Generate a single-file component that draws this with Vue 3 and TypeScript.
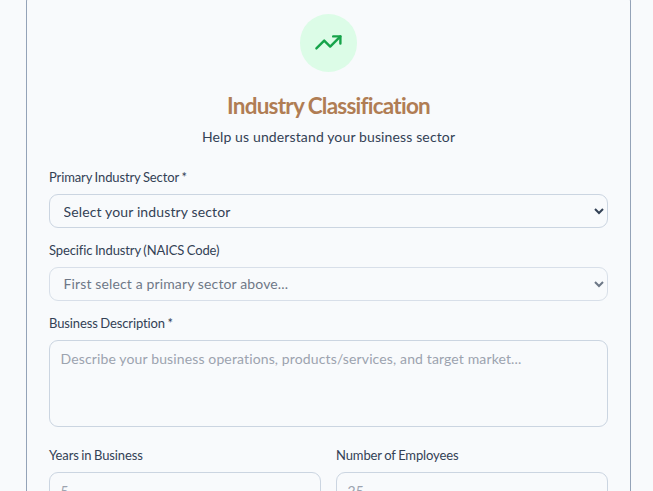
<script setup lang="ts">
import { ref } from 'vue'

const sector = ref('')
const naics = ref('')
const description = ref('')
const years = ref('')
const employees = ref('')
</script>

<template>
  <main class="page">
    <section class="card">
      <header class="head">
        <div class="badge">
          <svg viewBox="0 0 24 24" fill="none" stroke="currentColor" stroke-width="2" stroke-linecap="round" stroke-linejoin="round">
            <path d="M22 7 13.5 15.5 8.5 10.5 2 17" />
            <path d="M16 7h6v6" />
          </svg>
        </div>
        <h2>Industry Classification</h2>
        <p>Help us understand your business sector</p>
      </header>
      <form class="form" @submit.prevent>
        <div class="field">
          <label for="sector">Primary Industry Sector *</label>
          <select id="sector" v-model="sector">
            <option value="">Select your industry sector</option>
          </select>
        </div>
        <div class="field">
          <label for="naics">Specific Industry (NAICS Code)</label>
          <select id="naics" v-model="naics" disabled>
            <option value="">First select a primary sector above...</option>
          </select>
        </div>
        <div class="field description">
          <label for="description">Business Description *</label>
          <textarea id="description" v-model="description" placeholder="Describe your business operations, products/services, and target market..."></textarea>
        </div>
        <div class="row">
          <div class="field">
            <label for="years">Years in Business</label>
            <input id="years" v-model="years" type="number" placeholder="5" />
          </div>
          <div class="field">
            <label for="employees">Number of Employees</label>
            <input id="employees" v-model="employees" type="number" placeholder="25" />
          </div>
        </div>
      </form>
    </section>
  </main>
</template>

<style>
html {
  background: #f8fafc;
}
body {
  margin: 0;
  overflow: hidden;
}
</style>

<style scoped>
* {
  box-sizing: border-box;
}
.page {
  height: 491px;
  overflow: hidden;
  background: #f8fafc;
  color: #334155;
  font-family: Lato, sans-serif;
  font-size: 14px;
}
.card {
  width: 605px;
  height: 600px;
  margin: -9px 0 0 26px;
  padding: 22px;
  border: 1px solid #94a3b8;
  border-radius: 10px;
}
.head {
  display: flex;
  flex-direction: column;
  align-items: center;
}
.badge {
  display: flex;
  align-items: center;
  justify-content: center;
  width: 57.6px;
  height: 57.6px;
  border-radius: 50%;
  background: #dcfce7;
  color: #16a34a;
}
.badge svg {
  width: 28.8px;
  height: 28.8px;
}
h2 {
  margin: 19px 0 0;
  color: #b07d54;
  font-size: 22.5px;
  font-weight: 700;
  line-height: 29px;
  letter-spacing: -0.76px;
  word-spacing: -0.5px;
}
p {
  margin: 5px 0 0;
  line-height: 23px;
  letter-spacing: 0.13px;
}
.form {
  display: flex;
  flex-direction: column;
  gap: 14px;
  margin-top: 21px;
}
.field {
  display: flex;
  flex-direction: column;
  gap: 8px;
  min-width: 0;
}
.description {
  margin-bottom: 6px;
}
label {
  height: 17px;
  font-size: 13px;
  font-weight: 400;
  line-height: 17px;
  letter-spacing: -0.12px;
  word-spacing: -0.6px;
}
select,
textarea,
input {
  width: 100%;
  margin: 0;
  border: 1px solid #cbd5e1;
  border-radius: 9px;
  outline: 0;
  background: #f8fafc;
  color: #334155;
  font: inherit;
  letter-spacing: 0.13px;
}
select {
  height: 34px;
  padding: 1px 0 0 9.6px;
}
select:disabled {
  padding: 0 0 0 9.6px;
  opacity: 0.7;
}
textarea {
  display: block;
  height: 87px;
  padding: 7px 10.6px;
  line-height: 22px;
  resize: none;
}
input {
  height: 36px;
  padding: 8px 10.6px 6px;
}
textarea::placeholder,
input::placeholder {
  color: #9ca3af;
}
.row {
  display: grid;
  grid-template-columns: 1fr 1fr;
  gap: 15px;
}
</style>
